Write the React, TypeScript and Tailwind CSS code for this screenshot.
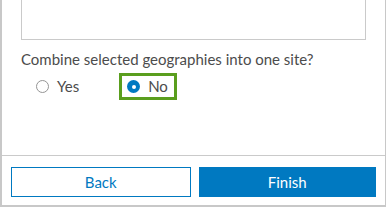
import React from 'react';

const Radio = ({ checked }: { checked?: boolean }) =>
    checked ? (
        <span className="flex h-[13px] w-[13px] items-center justify-center rounded-full bg-[#0079c1]">
            <span className="h-[4px] w-[4px] rounded-full bg-white" />
        </span>
    ) : (
        <span className="h-[13px] w-[13px] rounded-full border border-[#959595] bg-white" />
    );

const App = () => {
    return (
        <div
            className="flex h-[207px] w-[386px] flex-col border-b-2 border-l-2 border-r border-[#c8c8c8] bg-white text-[#4c4c4c]"
            style={{ fontFamily: 'Lato, "Open Sans", sans-serif' }}
        >
            <div className="h-[155px] px-[19px]">
                <div className="h-[40px] border-x border-b border-[#cacaca]" />
                <p className="mt-[9px] text-[15px] leading-[20px]">Combine selected geographies into one site?</p>
                <div className="mt-[4px] flex h-[27px] items-center">
                    <label className="ml-[15px] flex items-center gap-[8px] text-[15px]">
                        <Radio />
                        <span>Yes</span>
                    </label>
                    <label className="ml-[40px] flex h-[27px] items-center gap-[8px] border-[3px] border-[#5a9e1e] pl-[5px] pr-[6px] text-[15px]">
                        <Radio checked />
                        <span>No</span>
                    </label>
                </div>
            </div>
            <div className="flex flex-1 gap-[8px] border-t border-[#cacaca] px-[9px] pt-[11px]">
                <button className="h-[30px] flex-1 border border-[#0079c1] bg-white text-[15px] text-[#0079c1]">
                    Back
                </button>
                <button className="h-[30px] flex-1 bg-[#0079c1] text-[15px] text-white">Finish</button>
            </div>
        </div>
    );
};

export default App;
